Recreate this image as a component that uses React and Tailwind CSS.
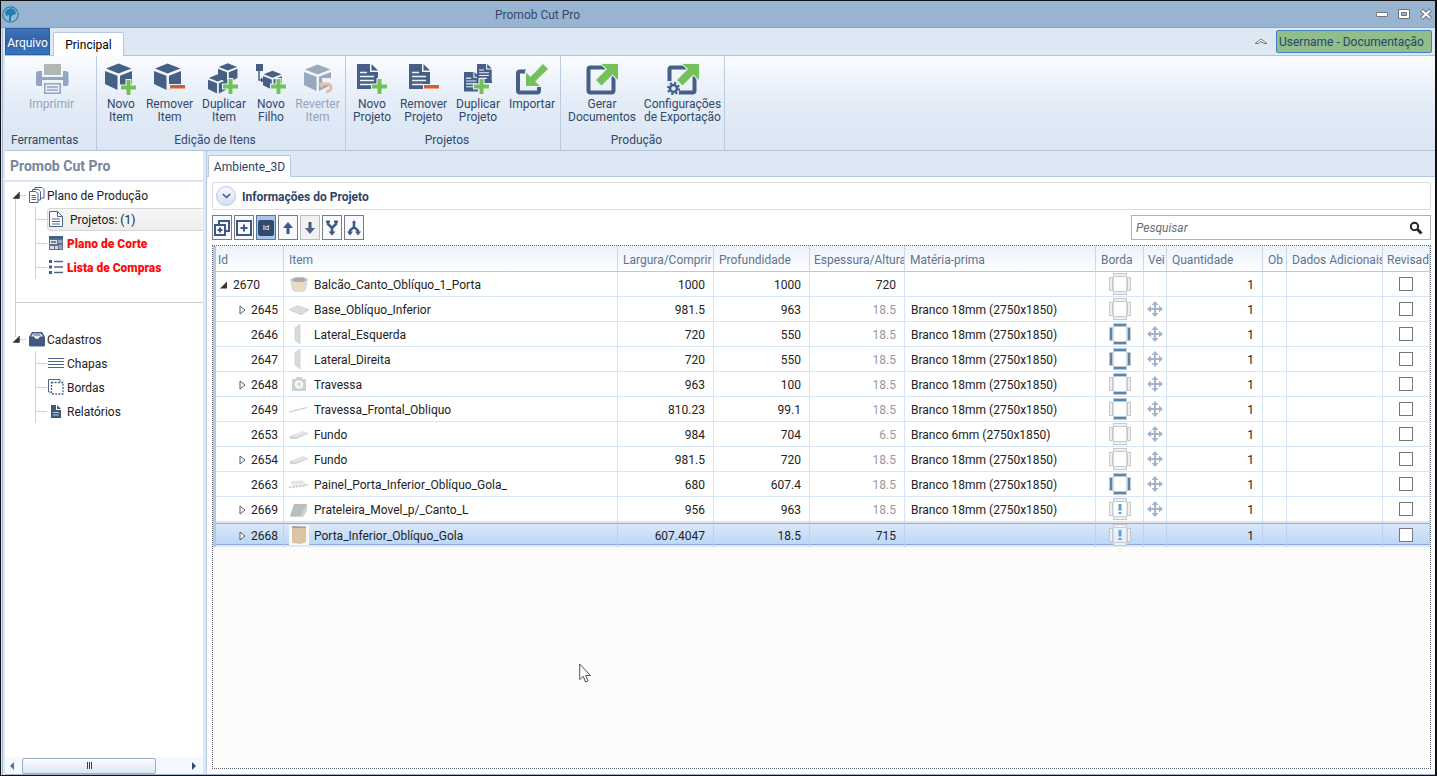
const NAVY = '#465f86'
const GREEN = '#74c15c'

function Cube({ x = 0, y = 0, s = 1 }) {
  return (
    <g transform={`translate(${x} ${y}) scale(${s})`} fill={NAVY}>
      <path d="M1 5.5 13.5.5 26.5 5.5 13.5 10.5Z" />
      <path d="M0 8 12.5 12.8V27L0 21Z" />
      <path d="M15 12.8 27 8V21L15 27Z" />
    </g>
  )
}

function Plus({ x = 16, y = 17 }) {
  return (
    <path
      transform={`translate(${x} ${y})`}
      d="M5.5 0h4v5.5H15v4H9.5V15h-4V9.5H0v-4h5.5Z"
      fill={GREEN}
      stroke="#eef3fa"
      strokeWidth="2"
      paintOrder="stroke"
    />
  )
}

function Minus() {
  return <path d="M16 22h15v3.5H16Z" fill="#d55f2a" stroke="#eef3fa" strokeWidth="2" paintOrder="stroke" />
}

function Doc({ x = 0, y = 0, s = 1 }) {
  return (
    <g transform={`translate(${x} ${y}) scale(${s})`}>
      <path d="M0 0H13V8H21V25H0Z" fill={NAVY} />
      <path d="M14.5 0 21 6.5H14.5Z" fill={NAVY} />
      <path d="M3 8.5h7M3 12.5h14M3 16.5h14M3 20.5h11" stroke="#eef3fa" strokeWidth="1.5" />
    </g>
  )
}

function RibbonIcon({ name }) {
  return (
    <svg className="h-8 w-8 overflow-visible" viewBox="0 0 32 32" aria-hidden="true">
      {name === 'print' && (
        <g>
          <path d="M8 1h17v11H8Z" fill="#b0b8b4" />
          <path d="M3 8h3v6h21V8h2.500q3 0 3 3v10q0 2-2 2H27v-6H6v6H2q-2 0-2-2V11q0-3 3-3Z" fill="#92a5c2" />
          <path d="M8.800 20.800h15.400v9.400H8.800Z" fill="#e8eff8" stroke="#92a5c2" strokeWidth="1.600" />
          <path d="M11 24h11M11 27h11" stroke="#92a5c2" strokeWidth="1.500" />
        </g>
      )}
      {name === 'item-new' && <><Cube /><Plus /></>}
      {name === 'item-remove' && <><Cube /><Minus /></>}
      {name === 'item-copy' && <><Cube x={10} y={0} s={0.72} /><Cube x={0} y={11} s={0.72} /><Plus x={15} y={16} /></>}
      {name === 'item-child' && (
        <>
          <path d="M1 1h7v7H1Z" fill={NAVY} />
          <path d="M4 8v9h4" fill="none" stroke={NAVY} strokeWidth="1.500" />
          <path d="M6 14.500 10 17 6 19.500Z" fill={NAVY} />
          <Cube x={8} y={7.500} s={0.7} />
          <Plus x={16} y={16} />
        </>
      )}
      {name === 'item-revert' && (
        <g opacity="0.5">
          <Cube x={2} y={1} />
          <path d="M20 18h7q4 1 4 6t-5 6" fill="none" stroke="#eef3fa" strokeWidth="6" />
          <path d="M20 21h6q3 1 3 4t-5 4" fill="none" stroke="#e08a5a" strokeWidth="3" />
          <path d="M16 21.500 21 18v8Z" fill="#e08a5a" />
        </g>
      )}
      {name === 'proj-new' && <><Doc x={1} y={1} /><Plus x={16} y={16} /></>}
      {name === 'proj-remove' && <><Doc x={1} y={1} /><Minus /></>}
      {name === 'proj-copy' && (
        <>
          <Doc x={15} y={1} s={0.7} />
          <path d="M15 18h15v2H15Z" fill={NAVY} />
          <Doc x={2} y={9} s={0.72} />
          <path d="M2 26h14v2.500H2Z" fill={NAVY} />
          <Plus x={12} y={16} />
        </>
      )}
      {name === 'import' && (
        <>
          <path d="M10 8.500H4q-2 0-2 2v17q0 2 2 2h17q2 0 2-2V23" fill="none" stroke={NAVY} strokeWidth="4" />
          <path d="M10 9.500 14.500 14 27 1 32 6 19 18.500 24 23H10Z" fill={GREEN} stroke="#eef3fa" strokeWidth="2" paintOrder="stroke" />
        </>
      )}
      {(name === 'export' || name === 'export-config') && (
        <>
          <rect x="2.500" y="4.500" width="25" height="25" rx="2" fill="none" stroke={NAVY} strokeWidth="4" />
          <path d="M15.500 1H32V17L26.500 11.500 15.500 22.500 10 17 21 6Z" fill={GREEN} stroke="#eef3fa" strokeWidth="2" paintOrder="stroke" />
        </>
      )}
      {name === 'export-config' && (
        <>
          <path d="M0 18h12v14H0Z" fill="#e4ecf7" />
          <circle cx="6.500" cy="25.500" r="3.500" fill="none" stroke={NAVY} strokeWidth="2.500" />
          <circle cx="6.500" cy="25.500" r="5.500" fill="none" stroke={NAVY} strokeWidth="2" strokeDasharray="2.200 2.100" />
        </>
      )}
    </svg>
  )
}

const ribbon = [
  {
    title: 'Ferramentas',
    width: 'w-[92px]',
    align: 'text-left pl-[6px]',
    items: [{ icon: 'print', lines: ['Imprimir'], width: 'w-[89px]', disabled: true }],
  },
  {
    title: 'Edição de Itens',
    width: 'w-[249px]',
    items: [
      { icon: 'item-new', lines: ['Novo', 'Item'], width: 'w-[44px]' },
      { icon: 'item-remove', lines: ['Remover', 'Item'], width: 'w-[53px]' },
      { icon: 'item-copy', lines: ['Duplicar', 'Item'], width: 'w-[56px]' },
      { icon: 'item-child', lines: ['Novo', 'Filho'], width: 'w-[38px]' },
      { icon: 'item-revert', lines: ['Reverter', 'Item'], width: 'w-[55px]', disabled: true },
    ],
  },
  {
    title: 'Projetos',
    width: 'w-[215px]',
    items: [
      { icon: 'proj-new', lines: ['Novo', 'Projeto'], width: 'w-[48px]' },
      { icon: 'proj-remove', lines: ['Remover', 'Projeto'], width: 'w-[55px]' },
      { icon: 'proj-copy', lines: ['Duplicar', 'Projeto'], width: 'w-[54px]' },
      { icon: 'import', lines: ['Importar'], width: 'w-[54px]' },
    ],
  },
  {
    title: 'Produção',
    width: 'w-[164px]',
    items: [
      { icon: 'export', lines: ['Gerar', 'Documentos'], width: 'w-[78px]' },
      { icon: 'export-config', lines: ['Configurações', 'de Exportação'], width: 'w-[83px]' },
    ],
  },
]

const columns = [
  { label: 'Id', width: 'w-[68px]', pad: 'pl-[2px]' },
  { label: 'Item', width: '' },
  { label: 'Largura/Comprir', width: 'w-[96px]' },
  { label: 'Profundidade', width: 'w-[96px]' },
  { label: 'Espessura/Altura', width: 'w-[95px]', pad: 'pl-[4px]' },
  { label: 'Matéria-prima', width: 'w-[191px]' },
  { label: 'Borda', width: 'w-[48px]' },
  { label: 'Vei', width: 'w-[23px]', pad: 'pl-[4px]' },
  { label: 'Quantidade', width: 'w-[96px]' },
  { label: 'Ob', width: 'w-[24px]' },
  { label: 'Dados Adicionais', width: 'w-[96px]' },
  { label: 'Revisad', width: 'w-[47px]', pad: 'pl-[4px]' },
]

// edge: which sides of the panel get an edge band
const rows = [
  { id: 2670, thumb: 'cabinet', name: 'Balcão_Canto_Oblíquo_1_Porta', w: '1000', d: '1000', h: '720', mat: '', edge: '', grain: false, open: true, root: true },
  { id: 2645, thumb: 'base', name: 'Base_Oblíquo_Inferior', w: '981.5', d: '963', h: '18.5', mat: 'Branco 18mm (2750x1850)', edge: '', grain: true, kids: true },
  { id: 2646, thumb: 'side', name: 'Lateral_Esquerda', w: '720', d: '550', h: '18.5', mat: 'Branco 18mm (2750x1850)', edge: 'tblr', grain: true },
  { id: 2647, thumb: 'side', name: 'Lateral_Direita', w: '720', d: '550', h: '18.5', mat: 'Branco 18mm (2750x1850)', edge: 'tblr', grain: true },
  { id: 2648, thumb: 'camera', name: 'Travessa', w: '963', d: '100', h: '18.5', mat: 'Branco 18mm (2750x1850)', edge: 'tb', grain: true, kids: true },
  { id: 2649, thumb: 'rail', name: 'Travessa_Frontal_Obliquo', w: '810.23', d: '99.1', h: '18.5', mat: 'Branco 18mm (2750x1850)', edge: 'tb', grain: true },
  { id: 2653, thumb: 'back', name: 'Fundo', w: '984', d: '704', h: '6.5', mat: 'Branco 6mm (2750x1850)', edge: '', grain: true },
  { id: 2654, thumb: 'back', name: 'Fundo', w: '981.5', d: '720', h: '18.5', mat: 'Branco 18mm (2750x1850)', edge: '', grain: true, kids: true },
  { id: 2663, thumb: 'panel', name: 'Painel_Porta_Inferior_Oblíquo_Gola_', w: '680', d: '607.4', h: '18.5', mat: 'Branco 18mm (2750x1850)', edge: 'tblr', grain: true },
  { id: 2669, thumb: 'shelf', name: 'Prateleira_Movel_p/_Canto_L', w: '956', d: '963', h: '18.5', mat: 'Branco 18mm (2750x1850)', edge: '!', grain: true, kids: true },
  { id: 2668, thumb: 'door', name: 'Porta_Inferior_Oblíquo_Gola', w: '607.4047', d: '18.5', h: '715', mat: '', edge: '!', grain: false, kids: true, selected: true },
]

function Thumb({ kind }) {
  return (
    <svg className="h-5 w-5 shrink-0" viewBox="0 0 20 20" aria-hidden="true">
      {kind === 'cabinet' && (
        <g>
          <path d="M1 5 6 3h9l4 2-2 11-3 2H6l-3-2Z" fill="#d9dbda" />
          <path d="M2 6 7 3.500h7l4 2.500-4 2H6Z" fill="#a9aeac" />
          <path d="M5 8h10v8.500H6Z" fill="#eddcb9" />
        </g>
      )}
      {kind === 'base' && (
        <g>
          <path d="M0 10 9 6l11 4-8 5Z" fill="#dadcdb" />
          <path d="M0 10v1l12 5v-1ZM12 16l8-5v-1l-8 5Z" fill="#c2c5c4" />
        </g>
      )}
      {kind === 'side' && <path d="M6 4 11 0v20l-5-4Z" fill="#dadcdb" stroke="#c4c7c6" strokeWidth="0.6" />}
      {kind === 'camera' && (
        <g>
          <path d="M3 5h3l2-2h4l2 2h2q1 0 1 1v10q0 1-1 1H4q-1 0-1-1Z" fill="#cfd1d1" />
          <circle cx="10" cy="10.500" r="3.200" fill="#dcdede" stroke="#fff" strokeWidth="1.600" />
        </g>
      )}
      {kind === 'rail' && <path d="M0 13 18 8.500" stroke="#c3c6c5" strokeWidth="1.200" />}
      {kind === 'back' && (
        <g>
          <path d="M0 12 14 7l6 2L8 14H1Z" fill="#e4e6e5" />
          <path d="M1 12v3h6l12-5v-1L8 13Z" fill="#d2d4d3" />
        </g>
      )}
      {kind === 'panel' && (
        <g>
          <path d="M2 8 14 6l5 6-16 2Z" fill="#ececeb" />
          <path d="M0 13.500 19 11" stroke="#c5c7c6" strokeWidth="1.600" strokeDasharray="2 1.500" />
          <path d="M2 8h11" stroke="#d5d6d5" />
        </g>
      )}
      {kind === 'shelf' && (
        <g>
          <path d="M5 5h13l-4 12H1Z" fill="#babebd" />
          <path d="M18 5v7l-4 6H1v-1h10Z" fill="#d0d3d2" />
        </g>
      )}
      {kind === 'door' && (
        <g>
          <path d="M0 0h20v20H0Z" fill="#fbf8f3" />
          <path d="M3 2h14v15l-5 2-9-1Z" fill="#d9c5a5" />
          <path d="M3 1 17 1.500v1.500L3 3Z" fill="#a3a09b" />
        </g>
      )}
    </svg>
  )
}

function EdgeIcon({ edge }) {
  const side = (k) => (edge.includes(k) ? '#4f87bb' : '#eef0f1')
  return (
    <svg className="mx-auto h-[22px] w-[22px]" viewBox="0 0 22 22" role="img" aria-label="Borda">
      <g stroke="#c8cac9" strokeWidth="1">
        <rect x="4.500" y="3.500" width="13" height="15" fill="#fefefe" stroke="#d6d8d7" opacity={edge === '!' ? 0.6 : 1} />
        <rect x="4.500" y="0.500" width="13" height="3" fill={side('t')} />
        <rect x="4.500" y="18.500" width="13" height="3" fill={side('b')} />
        <rect x="0.500" y="4.500" width="3" height="13" fill={side('l')} />
        <rect x="18.500" y="4.500" width="3" height="13" fill={side('r')} />
      </g>
      {edge === '!' && <path d="M9.500 6h3v6.500h-3ZM9.500 14h3v2h-3Z" fill="#5b9fd6" />}
    </svg>
  )
}

function GrainIcon() {
  return (
    <svg className="mx-auto h-4 w-4" viewBox="0 0 16 16" role="img" aria-label="Veio">
      <path d="M8 1.500v13M1.500 8h13" stroke="#a3b3cb" strokeWidth="2" />
      <path d="M8 0l3.500 4h-7ZM8 16l3.500-4h-7ZM0 8l4-3.500v7ZM16 8l-4-3.500v7Z" fill="#a3b3cb" />
    </svg>
  )
}

function TreeIcon({ name }) {
  return (
    <svg className="h-4 w-4 shrink-0 overflow-visible" viewBox="0 0 16 16" fill="none" stroke="#4f6587" aria-hidden="true">
      {name === 'plans' && (
        <g fill="#fff">
          <path d="M6 .5h7l2 2V11H6Z" />
          <path d="M3.500 2.500h6l2 2V13h-8Z" />
          <path d="M.5 4.500h6l2.500 2V15.500H.5Z" />
          <path d="M2.500 8.500h4M2.500 10.500h4.500M2.500 12.500h4.500" />
        </g>
      )}
      {name === 'doc' && (
        <g>
          <path d="M1.500.5h8l5 5v10h-13Z" fill="#fff" />
          <path d="M9.500.5v5h5M4 8h8M4 10.500h8M4 13h8" />
        </g>
      )}
      {name === 'cut' && (
        <g stroke="none">
          <path d="M1 1h14v14H1Z" fill="#64708a" />
          <path d="M1 1h14v3H1Z" fill="#465f86" />
          <path d="M2 5h7v4H2Z" fill="#e1e3e8" />
          <path d="M3 6h5v2H3Z" fill="#6a84aa" />
          <path d="M7 11h3v3H7ZM2 11h4v3H2Z" fill="#d3d7df" />
          <path d="M10 5h4v3h-4ZM11 10h3v4h-3Z" fill="#9aa6ba" />
        </g>
      )}
      {name === 'list' && (
        <g>
          <path d="M6 2.500h9M6 8h9M6 13.500h9" strokeWidth="1.300" />
          <path d="M1 1h3v3H1ZM1 6.500h3v3H1ZM1 12h3v3H1Z" fill="#465f86" stroke="none" />
        </g>
      )}
      {name === 'box' && (
        <g stroke="none">
          <path d="M3 1h10l3 5v8q0 1.500-1.500 1.500h-13Q0 15.500 0 14V6Z" fill="#41597f" />
          <path d="M4 2.500h8l2 3h-3q-1 2.500-3 2.500T5 5.500H2Z" fill="#e7ecf3" />
          <path d="M4.500 4h7" stroke="#41597f" />
        </g>
      )}
      {name === 'sheets' && <path d="M0 3.500h16M0 6.500h16M0 9.500h16M0 12.500h16" strokeWidth="1.200" />}
      {name === 'edges' && (
        <g>
          <path d="M3 13H.5V.5H12V3" />
          <path d="M3.500 3.500h11.500v11.500H3.500Z" strokeDasharray="2 1.200" strokeWidth="1.300" />
        </g>
      )}
      {name === 'report' && (
        <g stroke="none">
          <path d="M3 2h5v5h5v8H3ZM9 2l4 4H9Z" fill="#3f587f" />
          <path d="M5 9.500h6M5 12h6" stroke="#dfe5ee" strokeWidth="0.800" />
        </g>
      )}
    </svg>
  )
}

function TreeParent({ icon, label, top }) {
  return (
    <div className="flex h-6 items-center pl-[5px]">
      <button type="button" aria-label={`Recolher ${label}`} className="h-6 w-[19px] shrink-0">
        <svg className="h-6 w-[19px]" viewBox="0 0 19 24">
          <path d={top ? 'M5.500 14v10M10 12.500h6' : 'M5.500 0v10M10 12.500h6'} stroke="#cfcfcb" />
          <path d="M3 15.500 9.500 9V15.500Z" fill="#2f2f33" stroke="#4a4a4e" strokeWidth="0.600" />
        </svg>
      </button>
      <TreeIcon name={icon} />
      <span className="ml-[2px] pt-px">{label}</span>
    </div>
  )
}

function TreeLeaf({ icon, label, active, alert }) {
  return (
    <li className="flex h-6 items-center">
      <span className="h-px w-[11px] shrink-0 bg-[#cfcfcb]" />
      <a
        href="#"
        className={
          active
            ? 'flex h-[23px] flex-1 items-center gap-[6px] rounded-l border border-r-0 border-[#d7d7d7] bg-linear-to-b from-[#f6f6f6] to-[#ededed]'
            : 'flex h-[23px] flex-1 items-center gap-[3px] pl-px'
        }
      >
        <TreeIcon name={icon} />
        <span className={alert ? 'pt-px font-black text-[#fb0d0d]' : 'pt-px'}>{label}</span>
      </a>
    </li>
  )
}

function Sidebar() {
  return (
    <aside className="flex w-[198px] shrink-0 flex-col bg-white text-[#222]">
      <h2 className="h-[31px] border-b-2 border-[#dbe6f4] pl-[5px] text-[14px] leading-[31px] font-bold text-[#76869f]">
        Promob Cut Pro
      </h2>
      <nav className="flex-1 pt-px">
        <TreeParent icon="plans" label="Plano de Produção" top />
        <div className="ml-[10px] border-l border-[#cfcfcb] pb-6">
          <div className="border-b border-[#cfcfcb] pb-[23px] pl-[19px]">
            <ul className="border-l border-[#cfcfcb]">
              <TreeLeaf icon="doc" label="Projetos: (1)" active />
              <TreeLeaf icon="cut" label="Plano de Corte" alert />
              <TreeLeaf icon="list" label="Lista de Compras" alert />
            </ul>
          </div>
        </div>
        <TreeParent icon="box" label="Cadastros" />
        <ul className="ml-[30px] border-l border-[#cfcfcb]">
          <TreeLeaf icon="sheets" label="Chapas" />
          <TreeLeaf icon="edges" label="Bordas" />
          <TreeLeaf icon="report" label="Relatórios" />
        </ul>
      </nav>
      <div className="flex h-[17px] items-center bg-[#f5f8fd] px-[5px]">
        <button type="button" aria-label="Rolar para a esquerda" className="mr-2 h-4 w-1">
          <svg className="h-2 w-1" viewBox="0 0 4 8"><path d="M4 0v8L0 4Z" fill="#5b7296" /></svg>
        </button>
        <div className="flex h-4 w-[134px] items-center justify-center gap-px rounded-xs border border-[#9db0ca] bg-linear-to-b from-[#fafcff] to-[#dce6f4]">
          <i className="h-[7px] w-px bg-[#2d4468]" />
          <i className="h-[7px] w-px bg-[#2d4468]" />
          <i className="h-[7px] w-px bg-[#2d4468]" />
        </div>
        <button type="button" aria-label="Rolar para a direita" className="mr-[2px] ml-auto h-4 w-1">
          <svg className="h-2 w-1" viewBox="0 0 4 8"><path d="M0 0v8L4 4Z" fill="#2d4a7a" /></svg>
        </button>
      </div>
    </aside>
  )
}

const tools = [
  { name: 'expand-all', label: 'Expandir tudo' },
  { name: 'expand', label: 'Expandir' },
  { name: 'id', label: 'Mostrar Id' },
  { name: 'up', label: 'Mover para cima' },
  { name: 'down', label: 'Mover para baixo' },
  { name: 'merge', label: 'Agrupar' },
  { name: 'split', label: 'Desagrupar' },
]

function ToolIcon({ name }) {
  if (name === 'id') {
    return (
      <span className="flex h-4 w-4 items-center justify-center rounded-xs bg-[#334a70] text-[8px] leading-none text-white">
        Id
      </span>
    )
  }
  return (
    <svg className="h-4 w-4" viewBox="0 0 16 16" fill="none" stroke="#3f5880" strokeWidth="2" aria-hidden="true">
      {name === 'expand-all' && <path d="M5 4V1h10v10h-3M1 5h10v10H1ZM6 7.500v5M3.500 10h5" />}
      {name === 'expand' && <path d="M1 1h14v14H1ZM8 4.500v7M4.500 8h7" />}
      {name === 'up' && <g><path d="M8 14V5" strokeWidth="3" /><path d="M8 2 13 8H3Z" fill="#3f5880" stroke="none" /></g>}
      {name === 'down' && <g><path d="M8 2v9" strokeWidth="3" /><path d="M8 14 13 8H3Z" fill="#4b6488" stroke="none" /></g>}
      {name === 'merge' && (
        <g>
          <path d="M4 1v3l4 4 4-4V1M8 8v4" strokeWidth="2.600" />
          <path d="M2 1.500h4M10 1.500h4" />
          <path d="M8 15.500 11.500 11.500H4.500Z" fill="#3f5880" stroke="none" />
        </g>
      )}
      {name === 'split' && (
        <g>
          <path d="M8 2v5l-4 3.500v2M8 7l4 3.500v2" strokeWidth="2.400" />
          <path d="M4 15.500 7 11.500H1ZM12 15.500 15 11.500H9ZM8 0l2 3H6Z" fill="#3f5880" stroke="none" />
        </g>
      )}
    </svg>
  )
}

function toolClass(name) {
  const base = 'flex h-[25px] w-5 items-center justify-center border'
  if (name === 'id') return `${base} border-[#56779f] bg-[#a9c6e6]`
  if (name === 'down') return `${base} border-[#bdbdbd] bg-[#f1f1f1]`
  return `${base} border-[#7c7c7f] bg-[#f8f9fc]`
}

function Row({ row }) {
  const td = row.selected
    ? 'overflow-hidden border-r border-[#b9d0ee] whitespace-nowrap p-0 bg-[linear-gradient(to_bottom,#e3ecf8_0,#e3ecf8_1px,#94acce_1px,#94acce_2px,#dbe8f9_2px,#bcd7f7_22px,#8fabd0_22px,#8fabd0_23px,#dbe9f9_23px)]'
    : 'overflow-hidden border-r border-b border-[#d5e5f7] whitespace-nowrap p-0'
  return (
    <tr className="h-[25px]">
      <td className={td}>
        <div className={row.root ? 'flex items-center gap-[5px] pt-[2px] pl-[3px]' : 'flex items-center justify-end gap-[5px] pt-[2px] pr-[5px]'}>
          {row.open && (
            <button type="button" aria-label="Recolher" className="flex h-4 w-[9px] items-center">
              <svg className="h-2 w-[9px]" viewBox="0 0 9 8"><path d="M1 7.500 8 .5v7Z" fill="#333" /></svg>
            </button>
          )}
          {row.kids && (
            <button type="button" aria-label="Expandir" className="flex h-4 w-[7px] items-center">
              <svg className="h-[10px] w-[7px]" viewBox="0 0 7 10"><path d="M1 1v8L6 5Z" fill="#fff" stroke="#55585e" /></svg>
            </button>
          )}
          {row.id}
        </div>
      </td>
      <td className={td}>
        <div className="flex items-center gap-[5px] pl-[5px]">
          <Thumb kind={row.thumb} />
          <span className="pt-[2px]">{row.name}</span>
        </div>
      </td>
      <td className={`${td} text-right`}><div className="pt-[2px] pr-2">{row.w}</div></td>
      <td className={`${td} text-right`}><div className="pt-[2px] pr-2">{row.d}</div></td>
      <td className={`${td} text-right`}>
        <div className={row.mat ? 'pt-[2px] pr-2 text-[#989898]' : 'pt-[2px] pr-2'}>{row.h}</div>
      </td>
      <td className={td}><div className="pt-[2px] pl-[6px]">{row.mat}</div></td>
      <td className={td}><EdgeIcon edge={row.edge} /></td>
      <td className={td}>{row.grain && <GrainIcon />}</td>
      <td className={`${td} text-right`}><div className="pt-[2px] pr-2">1</div></td>
      <td className={td} />
      <td className={td} />
      <td className={td}>
        <input
          type="checkbox"
          aria-label={`Revisado ${row.id}`}
          className="mx-auto block h-[14px] w-[14px] appearance-none border border-[#77777c] bg-white"
        />
      </td>
    </tr>
  )
}

function Workspace() {
  return (
    <main className="flex min-w-0 flex-1 flex-col border-l border-[#b5c8e1] bg-[#dee8f5]">
      <div className="flex h-[26px] items-end border-b border-[#b5c8e1] pl-px">
        <button type="button" className="-mb-px h-[22px] w-[83px] rounded-t-xs border border-b-0 border-[#b5c8e1] bg-white pt-px text-[#2d4468]">
          Ambiente_3D
        </button>
      </div>
      <div className="flex min-h-0 flex-1 flex-col bg-white py-[5px] pr-1 pl-[5px]">
        <section className="flex h-7 shrink-0 items-center gap-[6px] rounded-xs border border-[#dcdcde] pl-[3px]">
          <button type="button" aria-label="Expandir informações" className="flex h-5 w-5 items-center justify-center rounded-full border border-[#b9c9e0] bg-linear-to-b from-[#f3f8fe] to-[#d3e2f4]">
            <svg className="h-[6px] w-[9px]" viewBox="0 0 9 6"><path d="M.8 1 4.500 4.500 8.200 1" fill="none" stroke="#3d5379" strokeWidth="1.500" /></svg>
          </button>
          <h3 className="pt-[2px] font-bold text-[#2d4468]">Informações do Projeto</h3>
        </section>
        <div className="mt-[5px] flex shrink-0 items-center justify-between">
          <div className="flex gap-[2px]">
            {tools.map((tool) => (
              <button key={tool.name} type="button" aria-label={tool.label} className={toolClass(tool.name)}>
                <ToolIcon name={tool.name} />
              </button>
            ))}
          </div>
          <div className="flex h-[25px] w-[300px] items-center border border-[#b3b3ae] bg-white pr-[7px]">
            <input
              type="text"
              aria-label="Pesquisar"
              placeholder="Pesquisar"
              className="min-w-0 flex-1 pl-[4px] outline-none placeholder:text-[#6c6c6c] placeholder:italic"
            />
            <button type="button" aria-label="Buscar">
              <svg className="h-[14px] w-[14px]" viewBox="0 0 14 14" fill="none" stroke="#2a2225">
                <circle cx="5.500" cy="5.500" r="3.700" strokeWidth="2" />
                <path d="M8.500 8.500 12.500 12.500" strokeWidth="3" />
              </svg>
            </button>
          </div>
        </div>
        <div className="mt-[5px] min-h-0 flex-1 overflow-hidden border border-dotted border-[#5e6678] bg-[#fcfcfb]">
          <table className="w-full table-fixed border-separate border-spacing-0 border-l-3 border-[#b9c6d8] bg-white text-[#222]">
            <thead>
              <tr className="h-[26px]">
                {columns.map((col) => (
                  <th
                    key={col.label}
                    scope="col"
                    className={`${col.width} ${col.pad || 'pl-[5px]'} overflow-hidden border-r border-b border-r-[#ccd7e6] border-b-[#b9c9de] bg-linear-to-b from-[#edf3fb] to-[#fdfeff] pt-[3px] text-left font-normal whitespace-nowrap text-[#5f7390]`}
                  >
                    {col.label}
                  </th>
                ))}
              </tr>
            </thead>
            <tbody>
              {rows.map((row) => <Row key={row.id} row={row} />)}
            </tbody>
          </table>
        </div>
      </div>
    </main>
  )
}

function TitleBar() {
  return (
    <header className="flex h-[27px] shrink-0 items-center border-b border-[#8aa5c6] bg-[#99b4d1] pr-[3px] pl-px">
      <svg className="h-[17px] w-[17px]" viewBox="0 0 17 17" aria-hidden="true">
        <circle cx="8.500" cy="8.500" r="7.700" fill="#8fb9d4" stroke="#2b80ac" strokeWidth="1.200" />
        <path d="M3 6 5 3.500 9 2l4 2 1 4-3 1-2 2v4H7V9L4 10Z" fill="#2a7dab" />
      </svg>
      <h1 className="flex-1 pt-[2px] pl-[476px] text-[#33486a]">Promob Cut Pro</h1>
      <div className="flex items-center gap-[10px]">
        <button type="button" aria-label="Minimizar">
          <svg className="h-3 w-3" viewBox="0 0 12 12"><rect x=".5" y="4.500" width="11" height="4" rx=".5" fill="#fff" stroke="#76787f" /></svg>
        </button>
        <button type="button" aria-label="Maximizar">
          <svg className="h-3 w-3" viewBox="0 0 12 12">
            <path d="M.5 1.500h11v9H.5ZM3.500 4.500v3h5v-3Z" fill="#fff" fillRule="evenodd" stroke="#70737c" />
          </svg>
        </button>
        <button type="button" aria-label="Fechar">
          <svg className="h-3 w-3" viewBox="0 0 12 12">
            <path d="M1.500 2 10.500 10.500M10.500 2 1.500 10.500" stroke="#70737c" strokeWidth="4" />
            <path d="M2 2.500 10 10M10 2.500 2 10" stroke="#fff" strokeWidth="2" />
          </svg>
        </button>
      </div>
    </header>
  )
}

function Ribbon() {
  return (
    <div className="shrink-0">
      <div className="flex h-7 items-end gap-[3px] border-b border-[#b0c3de] bg-[#dee8f5] pr-[3px]">
        <button type="button" className="h-[27px] w-[45px] shrink-0 border border-[#2b5ea0] bg-linear-to-b from-[#3f73b8] via-[#2f62aa] to-[#3576c0] pt-[2px] text-center text-white">
          Arquivo
        </button>
        <button type="button" className="-mb-px h-6 w-[71px] rounded-t-xs border border-b-0 border-[#b5c8e1] bg-white text-center text-black">
          Principal
        </button>
        <button type="button" aria-label="Recolher faixa de opções" className="mr-[5px] mb-[10px] ml-auto">
          <svg className="h-[7px] w-[14px]" viewBox="0 0 14 7">
            <path d="M1 5.500 7 1l6 4.500h-3L7 3.500 4 5.500Z" fill="#fff" stroke="#77777a" />
          </svg>
        </button>
        <button type="button" className="mb-[2px] h-[23px] w-[156px] rounded-xs border border-[#3f83c4] bg-[#8fbd8b] pl-[2px] text-left whitespace-nowrap text-[#2d4468]">
          Username - Documentação
        </button>
      </div>
      <div className="flex h-[95px] border-b border-[#b0c3de] bg-linear-to-b from-[#fafcff] via-[#e3ecf7] to-[#dbe6f3]">
        {ribbon.map((group) => (
          <section key={group.title} className={`${group.width} flex shrink-0 flex-col border-r border-[#bccbe0] pt-[7px]`}>
            <div className="flex h-[70px] pl-[2px]">
              {group.items.map((item) => (
                <button
                  key={item.icon}
                  type="button"
                  disabled={item.disabled}
                  className={`${item.width} ${item.disabled ? 'text-[#97a4b8]' : 'text-[#33486a]'} flex shrink-0 flex-col items-center`}
                >
                  <RibbonIcon name={item.icon} />
                  <span className="mt-[3px] leading-[13px] whitespace-nowrap">
                    {item.lines.map((line) => <span key={line} className="block text-center">{line}</span>)}
                  </span>
                </button>
              ))}
            </div>
            <h2 className={`${group.align || 'pr-3 text-center'} leading-[14px] text-[#33486a]`}>{group.title}</h2>
          </section>
        ))}
      </div>
    </div>
  )
}

export default function App() {
  return (
    <div className="relative flex h-screen min-h-[500px] flex-col overflow-hidden border border-r-2 border-[#111] bg-[#dee8f5] font-[Roboto,'Open_Sans',sans-serif] text-[12px] leading-4">
      <TitleBar />
      <div className="ml-px flex min-h-0 flex-1 flex-col border-l border-[#9fb5d3] bg-[#dee8f5] pl-[2px]">
        <Ribbon />
        <div className="flex min-h-0 flex-1 gap-[3px] border-b border-[#9fb5d3]">
          <Sidebar />
          <Workspace />
        </div>
      </div>
      <svg className="pointer-events-none absolute top-[662px] left-[578px] h-5 w-3" viewBox="0 0 12 20" aria-hidden="true">
        <path d="M.7 1v15.500L4.200 13.300 6.500 19l2.500-1L6.700 12.500h4.800Z" fill="#fff" stroke="#4d5068" />
      </svg>
    </div>
  )
}
